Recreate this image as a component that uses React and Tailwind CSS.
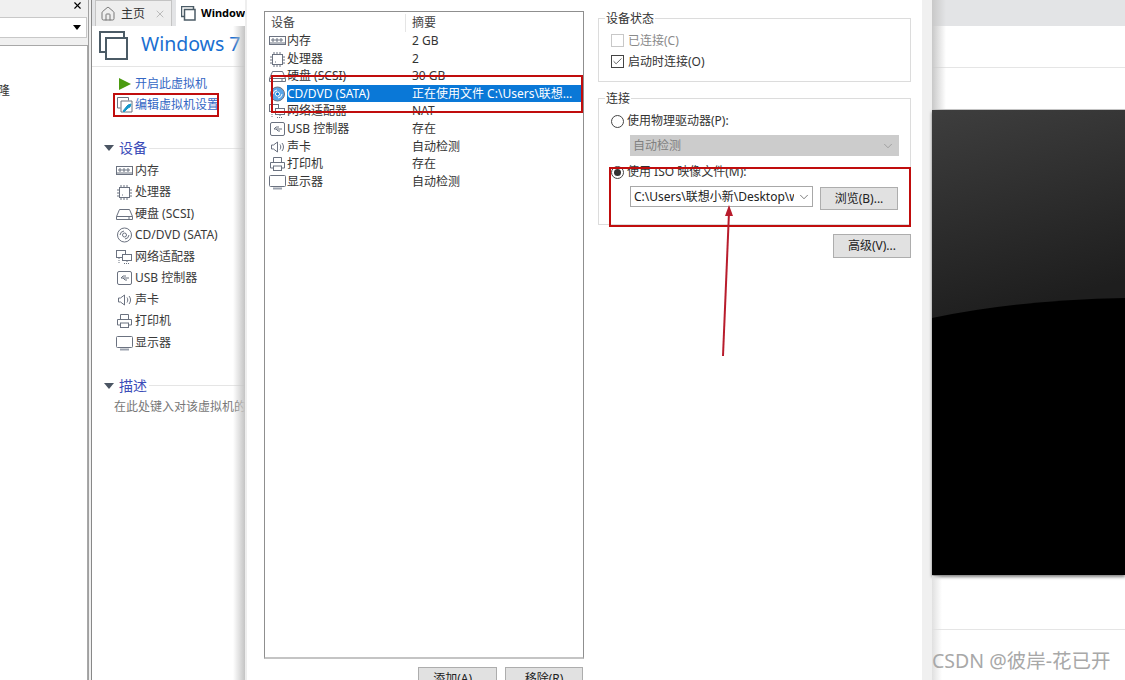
import { Check, ChevronDown, Home, X } from 'lucide-react';

const deviceRows = [
  ['memory', '内存', '2 GB'],
  ['cpu', '处理器', '2'],
  ['disk', '硬盘 (SCSI)', '30 GB'],
  ['cd', 'CD/DVD (SATA)', '正在使用文件 C:\\Users\\联想…'],
  ['net', '网络适配器', 'NAT'],
  ['usb', 'USB 控制器', '存在'],
  ['sound', '声卡', '自动检测'],
  ['print', '打印机', '存在'],
  ['screen', '显示器', '自动检测'],
];

function DeviceIcon({ kind, selected }) {
  const c = '#6b7280';
  return (
    <svg width="17" height="16" viewBox="0 0 17 16" fill="none" stroke={c} strokeWidth="1" className="shrink-0">
      {kind === 'memory' && (
        <>
          <rect x="0.5" y="3.5" width="16" height="8" />
          <path d="M3 6h2v2H3zM7 6h2v2H7zM11 6h2v2h-2zM1 10h15" />
        </>
      )}
      {kind === 'cpu' && (
        <>
          <rect x="3.5" y="3.5" width="10" height="10" />
          <path d="M5 1v2M8 1v2M11 1v2M5 14v2M8 14v2M11 14v2M1 6h2M1 9h2M1 12h2M14 6h2M14 9h2M14 12h2" />
          <path d="M6 11h1" />
        </>
      )}
      {kind === 'disk' && (
        <>
          <path d="M3.5 3.5h10l3 7v3H.5v-3z" />
          <path d="M.5 10.5h16M12 12h2" />
        </>
      )}
      {kind === 'cd' && (
        <>
          <circle cx="8.5" cy="8" r="7" fill={selected ? '#5aa5e6' : 'none'} />
          <circle cx="8.5" cy="8" r="2" fill={selected ? '#0a78d7' : 'none'} stroke={selected ? '#ffffff' : c} />
          <path d="M4 8a4.500 4.500 0 0 1 4-4M13 8a4.500 4.500 0 0 1-4 4" stroke={selected ? '#ffffff' : c} />
        </>
      )}
      {kind === 'net' && (
        <>
          <rect x="0.500" y="1.500" width="9" height="7" />
          <rect x="6.500" y="5.500" width="9" height="6" fill="#fff" />
          <path d="M11 12v2M8 14.500h6M3 9v5" strokeDasharray="1 1" />
        </>
      )}
      {kind === 'usb' && (
        <>
          <rect x="1.500" y="1.500" width="14" height="13" rx="1.500" />
          <path d="M5 8h8M5 8l2-2h3M7 8l2 2h2" />
        </>
      )}
      {kind === 'sound' && <path d="M2.500 6v4h2l4 3V3l-4 3zM11 5.500c1 1.500 1 3.500 0 5M13 4c2 2.500 2 5.500 0 8" />}
      {kind === 'print' && (
        <>
          <path d="M4.500 6V1.500h8V6M4.500 12h-3V6.500h14V12h-3" />
          <rect x="4.500" y="10" width="8" height="4.500" />
        </>
      )}
      {kind === 'screen' && (
        <>
          <rect x="0.500" y="1.500" width="16" height="11" rx="1" />
          <path d="M4 14.500h9" stroke="#9ca3af" strokeWidth="2" />
        </>
      )}
    </svg>
  );
}

function VmGlyph({ big }) {
  return (
    <svg width={big ? 30 : 15} height={big ? 30 : 15} viewBox="0 0 30 30" fill="none" stroke="#4b5b66" strokeWidth={big ? 2 : 3} className="shrink-0">
      <path d="M7 21H1V1h24v5" />
      <rect x="7" y="7" width="21" height="21" />
    </svg>
  );
}

function Section({ title, className }) {
  return (
    <div className={`flex items-center ${className}`}>
      <span className="w-0 h-0 ml-[12px] border-x-[5px] border-x-transparent border-t-[6px] border-t-[#4b5563]" />
      <span className="ml-[5px] text-[14px] leading-none text-[#3b4cb8]">{title}</span>
      <div className="ml-[2px] flex-1 h-px bg-[#e5e5e5]" />
    </div>
  );
}

function GrayButton({ children, className }) {
  return (
    <div className={`flex items-center justify-center shrink-0 bg-[#e1e1e1] border border-[#adadad] text-[12px] text-[#222] ${className}`}>
      {children}
    </div>
  );
}

function Radio({ on }) {
  return (
    <span className="flex items-center justify-center w-[13px] h-[13px] rounded-full border border-[#444] bg-white shrink-0">
      {on && <span className="w-[7px] h-[7px] rounded-full bg-[#333]" />}
    </span>
  );
}

export default function App() {
  return (
    <div
      className="relative flex w-[1125px] h-[680px] overflow-hidden bg-white text-[#333] text-[12px]"
      style={{ fontFamily: '"Noto Sans", "Noto Sans CJK SC", sans-serif' }}
    >
      {/* library panel */}
      <div className="w-[89px] shrink-0 flex flex-col bg-[#f0f0f0] border-r border-[#a0a0a0]">
        <div className="h-[17px] flex justify-end pr-[5px]">
          <X size={11} strokeWidth={2.5} className="text-black" />
        </div>
        <div className="h-[21px] mr-[1px] bg-white border-y border-r border-[#c8c8c8] flex justify-end items-center pr-[5px]">
          <span className="w-0 h-0 border-x-[4px] border-x-transparent border-t-[5px] border-t-black" />
        </div>
        <div className="h-[7px]" />
        <div className="flex-1 bg-white border-t border-r border-[#a8a8a8] pt-[37px] leading-4">
          <div className="-ml-[2px]">隆</div>
        </div>
      </div>
      <div className="w-[3px] shrink-0 bg-[#f0f0f0] border-r border-[#888]" />

      {/* vm summary */}
      <div className="relative w-[153px] shrink-0 flex flex-col overflow-hidden bg-white">
        <div className="h-[26px] shrink-0 flex items-end bg-[#e3e4e6] pl-[3px]">
          <div className="w-[77px] h-[26px] flex items-center border-x border-t border-[#c4c4c4] bg-[#eeeeee] pl-[4px]">
            <Home size={16} strokeWidth={1.5} className="text-[#777]" />
            <span className="ml-[5px] text-[#333]">主页</span>
            <X size={12} className="ml-[9px] text-[#bbb]" />
          </div>
          <div className="ml-[4px] flex-1 h-[26px] flex items-center bg-white pl-[5px] overflow-hidden whitespace-nowrap">
            <VmGlyph />
            <span className="ml-[5px] font-bold text-[11px] text-black">Windows 7</span>
          </div>
        </div>
        <div className="h-[41px] shrink-0 flex items-center border-b border-[#e5e5e5] pl-[7px]">
          <VmGlyph big />
          <span className="ml-[12px] pb-[4px] text-[19.500px] leading-none whitespace-nowrap text-[#1a6fd1]">Windows 7</span>
        </div>
        <div className="pl-[27px] pt-[7px] text-[#3467c4] leading-[18px]">
          <div className="h-[20px] flex items-center">
            <span className="w-0 h-0 border-y-[6.500px] border-y-transparent border-l-[12px] border-l-[#4b9b10]" />
            <span className="ml-[4px]">开启此虚拟机</span>
          </div>
          <div className="h-[22px] -ml-[2px] flex items-center">
            <svg width="16" height="16" viewBox="0 0 16 16" fill="none" stroke="#6b7280" className="shrink-0">
              <path d="M3.500 11H.5V.5h11v3" />
              <path d="M4 4h11v11H4z" />
              <path d="M6 14l4-5 1-1 3-1-1 3-2 1-4 4z" fill="#1597c9" stroke="#1597c9" />
            </svg>
            <span className="ml-[2px] whitespace-nowrap">编辑虚拟机设置</span>
          </div>
        </div>
        <Section title="设备" className="mt-[24px] h-[16px]" />
        <div className="pt-[4px] pl-[24px] whitespace-nowrap">
          {deviceRows.map(([kind, name]) => (
            <div key={kind} className="h-[21.500px] flex items-center gap-[2px] text-[#3a3a3a]">
              <DeviceIcon kind={kind} />
              <span>{name}</span>
            </div>
          ))}
        </div>
        <Section title="描述" className="mt-[24px] h-[16px]" />
        <div className="pl-[22px] pt-[4px] text-[#777] whitespace-nowrap">在此处键入对该虚拟机的描述</div>
        <div className="absolute right-0 top-[26px] bottom-0 w-[12px] bg-gradient-to-r from-transparent to-[#c4c4c4]" />
      </div>

      {/* settings dialog */}
      <div className="w-[687px] shrink-0 flex bg-white border-l-[2px] border-[#eeeeee] border-r border-r-[#777]">
        <div className="w-[675px] flex pl-[17px] pt-[11px]">
          <div className="w-[320px] shrink-0 flex flex-col">
            <div className="h-[648px] shrink-0 border border-[#8f8f8f] border-b-[#c4c4c4] border-b-2 pl-[4px] pr-[1px]">
              <div className="h-[20px] grid grid-cols-[137px_1fr] items-center pt-[2px] text-[#444]">
                <span className="pl-[2px] border-r border-[#e5e5e5]">设备</span>
                <span className="pl-[6px]">摘要</span>
              </div>
              {deviceRows.map(([kind, name, value]) => (
                <div key={kind} className="h-[17.600px] grid grid-cols-[137px_1fr] items-center whitespace-nowrap">
                  <div className="flex items-center gap-[1px]">
                    <DeviceIcon kind={kind} selected={kind === 'cd'} />
                    <span className={kind === 'cd' ? 'flex-1 h-[17.600px] leading-[17px] bg-[#0a78d7] text-white' : ''}>{name}</span>
                  </div>
                  <div className={kind === 'cd' ? 'h-[17.600px] leading-[17px] pl-[6px] bg-[#0a78d7] text-white overflow-hidden' : 'pl-[6px]'}>{value}</div>
                </div>
              ))}
            </div>
            <div className="flex justify-end gap-[8px] mt-[8px] pr-[1px]">
              <GrayButton className="w-[79px] h-[24px]">添加(A)...</GrayButton>
              <GrayButton className="w-[78px] h-[24px]">移除(R)</GrayButton>
            </div>
          </div>

          <div className="ml-[14px] w-[313px] shrink-0 flex flex-col pt-[7px] text-[#333]">
            <fieldset className="h-[64px] border border-[#dcdcdc] pl-[12px]">
              <div className="-mt-[9px] -ml-[6px] h-[18px] w-fit bg-white leading-[18px] px-[1px]">设备状态</div>
              <div className="flex items-center h-[21px] mt-[2px] text-[#8a8a8a]">
                <span className="w-[13px] h-[13px] border border-[#c8c8c8] shrink-0" />
                <span className="ml-[4px]">已连接(C)</span>
              </div>
              <div className="flex items-center h-[21px]">
                <span className="w-[13px] h-[13px] border border-[#444] shrink-0 flex items-center justify-center">
                  <Check size={11} strokeWidth={1.5} className="text-[#222]" />
                </span>
                <span className="ml-[4px]">启动时连接(O)</span>
              </div>
            </fieldset>
            <fieldset className="mt-[16px] h-[127px] border border-[#dcdcdc] pl-[12px]">
              <div className="-mt-[9px] -ml-[6px] h-[18px] w-fit bg-white leading-[18px] px-[1px]">连接</div>
              <div className="flex items-center h-[20px] mt-[3px]">
                <Radio />
                <span className="ml-[3px]">使用物理驱动器(P):</span>
              </div>
              <div className="ml-[19px] mt-[4px] w-[269px] h-[21px] bg-[#cccccc] flex items-center justify-between pl-[3px] pr-[4px] text-[#808080]">
                <span>自动检测</span>
                <ChevronDown size={14} strokeWidth={1} />
              </div>
              <div className="flex items-center h-[20px] mt-[6px]">
                <Radio on />
                <span className="ml-[3px]">使用 ISO 映像文件(M):</span>
              </div>
              <div className="flex mt-[4px] ml-[19px]">
                <div className="w-[183px] h-[21px] bg-white border border-[#a8a8a8] flex items-center justify-between pl-[3px] pr-[1px] whitespace-nowrap overflow-hidden text-[#222]">
                  <span className="w-[160px] overflow-hidden">C:\Users\联想小新\Desktop\w</span>
                  <ChevronDown size={14} strokeWidth={1} className="shrink-0" />
                </div>
                <GrayButton className="ml-[7px] w-[78px] h-[23px] mt-px">浏览(B)...</GrayButton>
              </div>
            </fieldset>
            <div className="flex justify-end mt-[9px]">
              <GrayButton className="w-[78px] h-[24px]">高级(V)...</GrayButton>
            </div>
          </div>
        </div>
        <div className="flex-1 bg-[#f0f0f0] -mr-px" />
      </div>

      {/* vm screen */}
      <div className="relative flex-1 flex flex-col">
        <div className="h-[26px] shrink-0 bg-[#e3e4e6]" />
        <div className="h-[42px] shrink-0 border-b border-[#e5e5e5]" />
        <div className="h-[42px] shrink-0 border-b border-[#c8c8c8]" />
        <div className="h-[465px] shrink-0 shadow-[0_2px_3px_rgba(0,0,0,0.5)]">
          <svg width="193" height="465" viewBox="0 0 193 465" className="block">
            <defs>
              <linearGradient id="screenFill" x1="0" y1="0" x2="0.25" y2="1">
                <stop offset="0" stopColor="#3e3e3e" />
                <stop offset="1" stopColor="#1e1e1e" />
              </linearGradient>
            </defs>
            <rect width="193" height="210" fill="url(#screenFill)" />
            <path d="M0 208Q85 190 193 188V465H0Z" fill="#000" />
          </svg>
        </div>
        <div className="h-[55px] shrink-0 border-b border-[#e5e5e5]" />
        <div className="absolute left-0 top-0 w-[14px] h-[110px] bg-gradient-to-r from-[#c8c8c8] to-transparent" />
        <div className="absolute left-0 top-[576px] w-[10px] h-[104px] bg-gradient-to-r from-[#e0e0e0] to-transparent" />
      </div>

      {/* annotations */}
      <div className="absolute left-[113px] top-[93px] w-[106px] h-[24px] border-2 border-[#c00d0d]" />
      <div className="absolute left-[271px] top-[75px] w-[312px] h-[38px] border-2 border-[#c00d0d]" />
      <div className="absolute left-[609px] top-[167px] w-[302px] h-[60px] border-2 border-[#c00d0d]" />
      <svg width="20" height="160" viewBox="0 0 20 160" className="absolute left-[717px] top-[200px]">
        <path d="M6 156L12 12" stroke="#b81c2c" strokeWidth="2" />
        <path d="M12 5L8 16H16Z" fill="#b81c2c" />
      </svg>
      <div className="absolute left-[932px] top-[649px] text-[19.500px] leading-6 text-[#a8a8a8] whitespace-nowrap">CSDN @彼岸-花已开</div>
    </div>
  );
}
